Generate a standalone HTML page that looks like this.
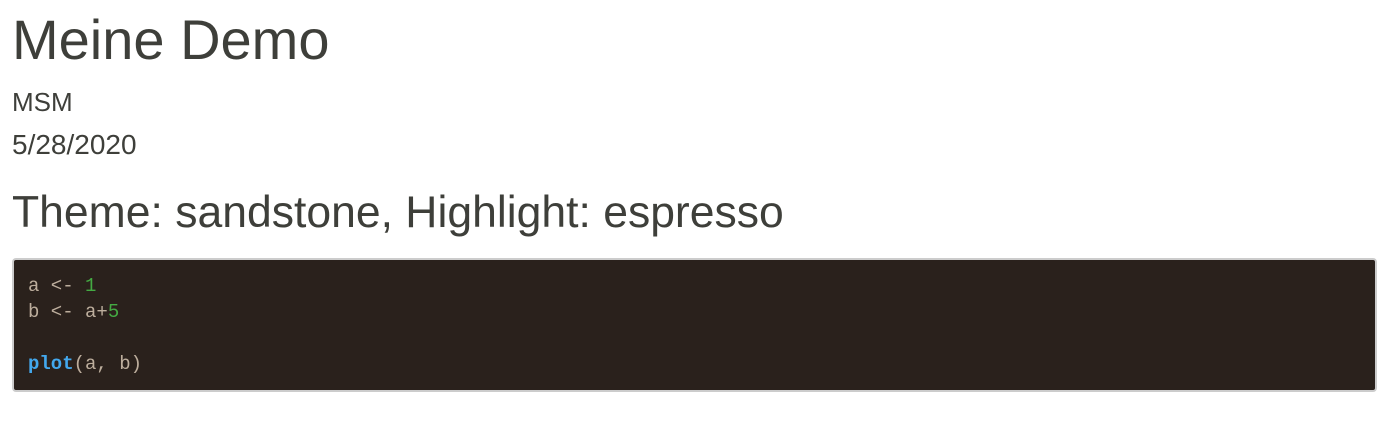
<!DOCTYPE html>
<html><head><meta charset="utf-8"><style>
body{margin:0;width:1388px;height:426px;background:#fff;font-family:"Liberation Sans",sans-serif;color:#3e3f3a;position:relative;overflow:hidden}
.t{position:absolute;left:12px;white-space:nowrap;line-height:1}
pre{position:absolute;left:12px;top:258px;width:1365px;height:134px;margin:0;box-sizing:border-box;background:#2a211c;border:2px solid #ccc;border-radius:4px;padding:13px 14px;font-family:"Liberation Mono",monospace;font-size:19px;line-height:26px;color:#bdae9d}
.n{color:#44aa43}.f{color:#43a8ed;font-weight:bold}
</style></head><body>
<div class="t" style="top:12px;font-size:56px">Meine Demo</div>
<div class="t" style="top:89px;font-size:26px">MSM</div>
<div class="t" style="top:131px;font-size:28px">5/28/2020</div>
<div class="t" style="top:191px;font-size:44.5px">Theme: sandstone, Highlight: espresso</div>
<pre>a &lt;- <span class="n">1</span>
b &lt;- a+<span class="n">5</span>

<span class="f">plot</span>(a, b)</pre>
</body></html>
